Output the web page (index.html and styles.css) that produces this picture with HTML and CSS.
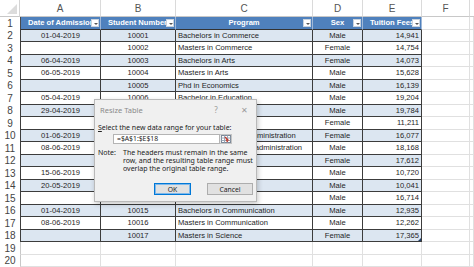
FILE: index.html
```html
<!DOCTYPE html>
<html>
<head>
<meta charset="utf-8">
<link rel="stylesheet" href="styles.css">
</head>
<body>
<div class="sheet">
  <div class="grid">
    <div class="corner"><span class="tri"></span></div>
    <div class="ch">A</div><div class="ch">B</div><div class="ch">C</div><div class="ch">D</div><div class="ch">E</div><div class="ch">F</div><div class="ch last"></div>

    <div class="rh">1</div>
    <div class="th first l"><span>Date of Admission</span><i class="dd"></i></div>
    <div class="th l"><span>Student Number</span><i class="dd"></i></div>
    <div class="th"><span>Program</span><i class="dd"></i></div>
    <div class="th"><span>Sex</span><i class="dd"></i></div>
    <div class="th l"><span>Tuition Fees</span><i class="dd"></i></div>
    <div class="g"></div><div class="g"></div>

    <div class="rh">2</div><div class="td b first">01-04-2019</div><div class="td b">10001</div><div class="td b l">Bachelors in Commerce</div><div class="td b">Male</div><div class="td b r">14,941</div><div class="g"></div><div class="g"></div>
    <div class="rh">3</div><div class="td first"></div><div class="td">10002</div><div class="td l">Masters in Commerce</div><div class="td">Female</div><div class="td r">14,754</div><div class="g"></div><div class="g"></div>
    <div class="rh">4</div><div class="td b first">06-04-2019</div><div class="td b">10003</div><div class="td b l">Bachelors in Arts</div><div class="td b">Female</div><div class="td b r">14,073</div><div class="g"></div><div class="g"></div>
    <div class="rh">5</div><div class="td first">06-05-2019</div><div class="td">10004</div><div class="td l">Masters in Arts</div><div class="td">Male</div><div class="td r">15,628</div><div class="g"></div><div class="g"></div>
    <div class="rh">6</div><div class="td b first"></div><div class="td b">10005</div><div class="td b l">Phd in Economics</div><div class="td b">Male</div><div class="td b r">16,139</div><div class="g"></div><div class="g"></div>
    <div class="rh">7</div><div class="td first">05-04-2019</div><div class="td">10006</div><div class="td l">Bachelor in Education</div><div class="td">Male</div><div class="td r">19,204</div><div class="g"></div><div class="g"></div>
    <div class="rh">8</div><div class="td b first">29-04-2019</div><div class="td b"></div><div class="td b l"></div><div class="td b">Male</div><div class="td b r">19,784</div><div class="g"></div><div class="g"></div>
    <div class="rh">9</div><div class="td first"></div><div class="td"></div><div class="td l"></div><div class="td">Female</div><div class="td r">11,211</div><div class="g"></div><div class="g"></div>
    <div class="rh">10</div><div class="td b first">01-06-2019</div><div class="td b"></div><div class="td b l">Masters in Business Administration</div><div class="td b">Female</div><div class="td b r">16,077</div><div class="g"></div><div class="g"></div>
    <div class="rh">11</div><div class="td first">08-06-2019</div><div class="td"></div><div class="td l">Bachelors in Business administration</div><div class="td">Male</div><div class="td r">18,168</div><div class="g"></div><div class="g"></div>
    <div class="rh">12</div><div class="td b first"></div><div class="td b"></div><div class="td b l">Bachelors in Medicine</div><div class="td b">Female</div><div class="td b r">17,612</div><div class="g"></div><div class="g"></div>
    <div class="rh">13</div><div class="td first">15-06-2019</div><div class="td"></div><div class="td l"></div><div class="td">Male</div><div class="td r">10,720</div><div class="g"></div><div class="g"></div>
    <div class="rh">14</div><div class="td b first">20-05-2019</div><div class="td b"></div><div class="td b l"></div><div class="td b">Male</div><div class="td b r">10,041</div><div class="g"></div><div class="g"></div>
    <div class="rh">15</div><div class="td first"></div><div class="td"></div><div class="td l"></div><div class="td">Male</div><div class="td r">16,714</div><div class="g"></div><div class="g"></div>
    <div class="rh">16</div><div class="td b first">01-04-2019</div><div class="td b">10015</div><div class="td b l">Bachelors in Communication</div><div class="td b">Male</div><div class="td b r">12,935</div><div class="g"></div><div class="g"></div>
    <div class="rh">17</div><div class="td first">08-06-2019</div><div class="td">10016</div><div class="td l">Masters in Communication</div><div class="td">Male</div><div class="td r">12,262</div><div class="g"></div><div class="g"></div>
    <div class="rh">18</div><div class="td b first"></div><div class="td b">10017</div><div class="td b l">Masters in Science</div><div class="td b">Female</div><div class="td b r end">17,365</div><div class="g"></div><div class="g"></div>
    <div class="rh">19</div><div class="g gfirst"></div><div class="g"></div><div class="g"></div><div class="g"></div><div class="g"></div><div class="g"></div><div class="g"></div>
    <div class="rh">20</div><div class="g gfirst"></div><div class="g"></div><div class="g"></div><div class="g"></div><div class="g"></div><div class="g"></div><div class="g"></div>
  </div>

  <div class="dialog">
    <div class="dtitle"><span class="dname">Resize Table</span><span class="dhelp">?</span><span class="dclose">✕</span></div>
    <div class="dlabel"><u>S</u>elect the new data range for your table:</div>
    <div class="drange">
      <div class="dinput">=$A$1:$E$18</div>
      <div class="dpick">
        <svg width="10" height="8" viewBox="0 0 10 8"><rect x="0.5" y="0.5" width="9" height="7" fill="#fff" stroke="#7d8a99"/><path d="M0.5 3H9.5M0.5 5.5H9.5M3.5 0.5V7.5M6.5 0.5V7.5" stroke="#9aa8b8" stroke-width="1"/><path d="M4 2L7 5L5.5 5L6.5 7" stroke="#c0392b" stroke-width="1.2" fill="none"/></svg>
      </div>
    </div>
    <div class="dnote">
      <span class="nlabel">Note:</span>
      <span class="ntext">The headers must remain in the same row, and the resulting table range must overlap the original table range.</span>
    </div>
    <div class="dbtns">
      <div class="btn ok">OK</div>
      <div class="btn">Cancel</div>
    </div>
  </div>
</div>
</body>
</html>
```

FILE: styles.css
```css
* { box-sizing: border-box; }
html, body { margin: 0; padding: 0; background: #fff; }
body { width: 474px; height: 267px; overflow: hidden; font-family: "Liberation Sans", Arial, sans-serif; }

.sheet { position: relative; width: 474px; height: 267px; overflow: hidden; }

.grid {
  display: grid;
  width: 474px;
  grid-template-columns: 20px 81px 75px 137px 50px 59px 48px 1fr;
  grid-template-rows: 17px repeat(20, 12.5px);
}

.corner { border-right: 1px solid #d4d4d4; border-bottom: 1px solid #c8c8c8; position: relative; background: #fff; }
.tri { position: absolute; right: 2px; bottom: 2px; width: 0; height: 0; border-left: 10px solid transparent; border-bottom: 10px solid #dcdcdc; }

.ch {
  display: flex; align-items: center; justify-content: center;
  font-size: 10px; color: #555;
  border-right: 1px solid #dadada; border-bottom: 1px solid #c8c8c8;
  background: #fff;
}
.ch.last { border-right: none; }

.rh {
  display: flex; align-items: center; justify-content: center;
  font-size: 10px; color: #444;
  background: #fff;
}

.g { border-right: 1px solid #e0e0e0; border-bottom: 1px solid #e0e0e0; }
.g.gfirst { border-left: 1px solid #c8c8c8; }

.th {
  position: relative;
  display: flex; align-items: center; justify-content: center;
  background: #4f81bd; color: #fff; font-weight: bold; font-size: 7.6px;
  border-right: 1px solid #9fb8d8; border-bottom: 1px solid #333;
  overflow: hidden; white-space: nowrap;
}
.th.first { border-left: 1px solid #4a4a4a; }
.th.l { justify-content: flex-start; padding-left: 7px; }
.th span { display: block; }
.dd {
  position: absolute; right: 1px; top: 2px;
  width: 8px; height: 8px; background: #fff; border: 1px solid #c9d3de;
}
.dd::after {
  content: ""; position: absolute; left: 1.5px; top: 2.5px;
  border-left: 2px solid transparent; border-right: 2px solid transparent; border-top: 2px solid #555;
}

.td {
  display: flex; align-items: center; justify-content: center;
  font-size: 7.6px; color: #1e1e1e; white-space: nowrap; overflow: hidden;
  border-right: 1px solid #3c3c3c; border-bottom: 1px solid #3c3c3c;
  background: #fff;
}
.td.first { border-left: 1px solid #3c3c3c; }
.td.b { background: #dce6f1; }
.td.l { justify-content: flex-start; padding-left: 2px; }
.td.r { justify-content: flex-end; padding-right: 2px; }
.td.end { position: relative; }
.td.end::after { content: ""; position: absolute; right: 0; bottom: 0; border-left: 3px solid transparent; border-bottom: 3px solid #1f3f6a; }

/* dialog */
.dialog {
  position: absolute; left: 94px; top: 99px; width: 163px; height: 103px;
  background: #f0f0f0; border: 1px solid #b9b9b9;
  box-shadow: 1px 2px 5px rgba(0,0,0,0.22);
  font-family: "Noto Sans", "Liberation Sans", sans-serif; color: #222;
  display: flex; flex-direction: column;
}
.dtitle { height: 19px; display: flex; align-items: center; padding-left: 5px; font-size: 7.5px; color: #8a8a8a; }
.dname { flex: 1; }
.dhelp { width: 10px; margin-right: 18px; text-align: center; font-size: 8px; color: #9a9a9a; }
.dclose { width: 10px; margin-right: 7px; text-align: center; font-size: 8px; color: #9a9a9a; }
.dlabel { font-size: 7px; padding-left: 3px; margin-top: 4px; line-height: 9px; white-space: nowrap; }
.drange { display: flex; margin: 2px 0 0 18px; height: 10px; }
.dinput { width: 107px; height: 10px; background: #fff; border: 1px solid #b4b4b4; font-size: 6.8px; line-height: 8px; padding-left: 3px; }
.dpick { width: 12px; height: 10px; background: #e9e9e9; border: 1px solid #c4c4c4; border-left: none; display: flex; align-items: center; justify-content: center; }
.dnote { display: flex; margin-top: 5px; padding-left: 3px; font-size: 7px; line-height: 8px; }
.nlabel { width: 25px; flex: none; }
.ntext { width: 130px; }
.dbtns { display: flex; margin: auto 0 6px 59px; gap: 16px; }
.btn { height: 12px; font-size: 6.8px; display: flex; align-items: center; justify-content: center; background: #e1e1e1; border: 1px solid #adadad; width: 46px; }
.btn.ok { width: 37px; border-color: #0078d7; box-shadow: inset 0 0 0 1px #7fb8ea; }
```
